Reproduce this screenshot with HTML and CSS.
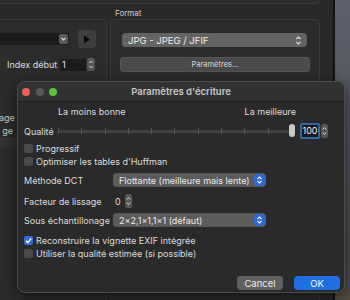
FILE: index.html
```html
<!DOCTYPE html>
<html lang="fr">
  <head>
    <meta charset="UTF-8" />
    <title>Paramètres d'écriture</title>
    <link rel="stylesheet" href="styles.css">
  </head>
  <body>
    <div class="screen">
      <!-- Fenêtre principale (en arrière-plan) -->
      <div class="app">
        <div class="top-box"></div>
        <div class="format-title">Format</div>
        <div class="panels">
          <div class="panel panel-left">
            <div class="row-file">
              <div class="combo">
                <span class="combo-btn">
                  <svg width="9" height="10" viewBox="0 0 9 10"><path d="M2.5 4 L4.5 6 L6.5 4" fill="none" stroke="#ddd" stroke-width="1.2"/></svg>
                </span>
              </div>
              <div class="play">
                <svg width="8" height="9" viewBox="0 0 8 9"><path d="M1 0.5 L7 4.5 L1 8.5 Z" fill="#0a0a0a"/></svg>
              </div>
            </div>
            <div class="row-index">
              <span class="index-label">Index début</span>
              <span class="num-field">1</span>
              <svg class="stepper" width="8" height="13" viewBox="0 0 8 13"><rect x="0" y="0" width="8" height="13" rx="2.5" fill="#565656"/><path d="M2.3 5 L4 3.2 L5.7 5 M2.3 8 L4 9.8 L5.7 8" fill="none" stroke="#ddd" stroke-width="1"/></svg>
            </div>
            <div class="cut-label cut-first">age</div>
            <div class="cut-label">ge</div>
            <div class="list-band"></div>
          </div>
          <div class="panel panel-right">
            <div class="popup-back">
              <span>JPG - JPEG / JFIF</span>
              <svg width="7" height="11" viewBox="0 0 7 11"><path d="M1.5 4 L3.5 2 L5.5 4 M1.5 7 L3.5 9 L5.5 7" fill="none" stroke="#e6e6e6" stroke-width="1.1"/></svg>
            </div>
            <div class="push-back">Paramètres...</div>
          </div>
        </div>
      </div>
      <div class="desktop"></div>

      <!-- Boîte de dialogue -->
      <div class="dialog">
        <div class="titlebar">
          <div class="lights">
            <span class="light red"></span>
            <span class="light gray"></span>
            <span class="light green"></span>
          </div>
          <div class="dialog-title">Paramètres d'écriture</div>
        </div>

        <div class="dialog-body">
          <div class="row-scale">
            <span>La moins bonne</span>
            <span>La meilleure</span>
          </div>

          <div class="row-quality">
            <span class="quality-label">Qualité</span>
            <div class="slider">
              <div class="track"></div>
              <div class="ticks">
                <i></i><i></i><i></i><i></i><i></i><i></i><i></i><i></i><i></i><i></i><i></i>
              </div>
              <div class="knob"></div>
            </div>
            <span class="num-focus">100</span>
            <svg class="stepper" width="7" height="14" viewBox="0 0 7 14"><rect x="0" y="0" width="7" height="14" rx="2.5" fill="#575757"/><path d="M1.8 5.5 L3.5 3.5 L5.2 5.5 M1.8 8.5 L3.5 10.5 L5.2 8.5" fill="none" stroke="#ddd" stroke-width="1"/></svg>
          </div>

          <div class="checks">
            <label class="check"><span class="box"></span>Progressif</label>
            <label class="check"><span class="box"></span>Optimiser les tables d'Huffman</label>
          </div>

          <div class="form-row row-method">
            <span class="form-label">Méthode DCT</span>
            <div class="popup">
              <span>Flottante (meilleure mais lente)</span>
              <svg width="11" height="12" viewBox="0 0 11 12"><rect width="11" height="12" rx="3" fill="#2f6bd6"/><path d="M3.5 5 L5.5 3 L7.5 5 M3.5 7 L5.5 9 L7.5 7" fill="none" stroke="#fff" stroke-width="1.1"/></svg>
            </div>
          </div>

          <div class="form-row row-smooth">
            <span class="form-label">Facteur de lissage</span>
            <span class="num-small">0</span>
            <svg class="stepper" width="7" height="14" viewBox="0 0 7 14"><rect x="0" y="0" width="7" height="14" rx="2.5" fill="#575757"/><path d="M1.8 5.5 L3.5 3.5 L5.2 5.5 M1.8 8.5 L3.5 10.5 L5.2 8.5" fill="none" stroke="#ddd" stroke-width="1"/></svg>
          </div>

          <div class="form-row row-sub">
            <span class="form-label">Sous échantillonage</span>
            <div class="popup">
              <span>2x2,1x1,1x1 (défaut)</span>
              <svg width="11" height="12" viewBox="0 0 11 12"><rect width="11" height="12" rx="3" fill="#2f6bd6"/><path d="M3.5 5 L5.5 3 L7.5 5 M3.5 7 L5.5 9 L7.5 7" fill="none" stroke="#fff" stroke-width="1.1"/></svg>
            </div>
          </div>

          <div class="checks checks-bottom">
            <label class="check"><span class="box on">
              <svg width="9" height="9" viewBox="0 0 9 9"><path d="M2 4.8 L3.8 6.6 L7.2 2.4" fill="none" stroke="#fff" stroke-width="1.4"/></svg>
            </span>Reconstruire la vignette EXIF intégrée</label>
            <label class="check"><span class="box"></span>Utiliser la qualité estimée (si possible)</label>
          </div>

          <div class="actions">
            <button class="btn btn-cancel">Cancel</button>
            <button class="btn btn-ok">OK</button>
          </div>
        </div>
      </div>
    </div>
  </body>
</html>
```

FILE: styles.css
```css
* {
  margin: 0;
  padding: 0;
  box-sizing: border-box;
}

body {
  font-family: Inter, "Noto Sans", sans-serif;
  font-size: 9px;
  color: #dedede;
  background-color: #282828;
  white-space: nowrap;
}

.screen {
  position: relative;
  display: flex;
  width: 350px;
  height: 300px;
  overflow: hidden;
}

/* Fenêtre en arrière-plan */
.app {
  width: 335px;
  height: 300px;
  background-color: #292929;
  border-right: 2px solid #151515;
}

.desktop {
  flex: 1;
  background: linear-gradient(180deg, #5d616c 0%, #4f525a 50%, #4a4a4c 85%, #5a4e44 100%);
}

.top-box {
  width: 320px;
  height: 4px;
  border: 1px solid #3a3a3a;
  border-top: none;
  border-left: none;
  border-bottom-right-radius: 4px;
  background-color: #2c2c2c;
}

.format-title {
  height: 15px;
  padding: 4px 0 0 115px;
  font-size: 8px;
  line-height: 11px;
  color: #cfcfcf;
}

.panels {
  display: flex;
  gap: 3px;
}

.panel {
  height: 290px;
  background-color: #2c2c2c;
  border: 1px solid #3a3a3a;
  border-radius: 4px;
}

.panel-left {
  width: 108px;
  margin-left: -1px;
  border-left: none;
  border-radius: 0 4px 4px 0;
}

.panel-right {
  width: 210px;
  padding: 13px 12px 0 11px;
}

.row-file {
  display: flex;
  align-items: center;
  height: 18px;
  margin-top: 10px;
}

.combo {
  display: flex;
  justify-content: flex-end;
  align-items: center;
  width: 70px;
  height: 12px;
  background-color: #1c1c1c;
  border-radius: 0 3px 3px 0;
  padding-right: 1px;
}

.combo-btn {
  display: flex;
  align-items: center;
  justify-content: center;
  width: 9px;
  height: 10px;
  background-color: #5a5a5a;
  border-radius: 2px;
}

.play {
  display: flex;
  align-items: center;
  justify-content: center;
  width: 18px;
  height: 18px;
  margin-left: 9px;
  background-color: #3e3e3e;
  border-radius: 3px;
}

.row-index {
  display: flex;
  align-items: center;
  height: 13px;
  margin-top: 10px;
  padding-left: 8px;
}

.index-label {
  width: 53px;
}

.num-field {
  width: 26px;
  height: 12px;
  line-height: 12px;
  padding-left: 2px;
  background-color: #1c1c1c;
  color: #e6e6e6;
}

.row-index .stepper {
  margin-left: 1px;
}

.cut-label {
  width: 14px;
  height: 13px;
  line-height: 13px;
  text-align: right;
  color: #cfcfcf;
}

.cut-first {
  margin-top: 40px;
}

.list-band {
  height: 9px;
  margin-top: 1px;
  border-top: 1px solid #3c3c3c;
  background-color: #323232;
}

.popup-back {
  display: flex;
  align-items: center;
  justify-content: space-between;
  height: 14px;
  padding: 0 5px 0 6px;
  background-color: #636363;
  border-radius: 4px;
  color: #f0f0f0;
  font-size: 9.5px;
}

.push-back {
  height: 15px;
  margin: 10px -3px 0 -2px;
  line-height: 13px;
  text-align: center;
  font-size: 7.5px;
  color: #dcdcdc;
  background-color: #4b4b4b;
  border: 1px solid #555;
  border-radius: 3px;
}

/* Boîte de dialogue */
.dialog {
  position: absolute;
  left: 17px;
  top: 81px;
  width: 328px;
  height: 212px;
  display: flex;
  flex-direction: column;
  background-color: #2a2a2a;
  border: 1px solid #4c4c4c;
  border-radius: 8px;
  box-shadow: 0 4px 16px rgba(0, 0, 0, 0.6);
  overflow: hidden;
}

.titlebar {
  position: relative;
  display: flex;
  align-items: center;
  height: 20px;
  background-color: #323232;
  border-bottom: 1px solid #1d1d1d;
}

.lights {
  display: flex;
  gap: 5.5px;
  padding-left: 4px;
}

.light {
  width: 8px;
  height: 8px;
  border-radius: 50%;
}

.red {
  background-color: #ec5f57;
}

.gray {
  background-color: #585858;
}

.green {
  background-color: #5ec23e;
}

.dialog-title {
  position: absolute;
  left: 0;
  right: 0;
  text-align: center;
  font-weight: 600;
  font-size: 9.5px;
  color: #c9c9c9;
}

.dialog-body {
  flex: 1;
  display: flex;
  flex-direction: column;
  padding: 0 4px 2px 6px;
}

.row-scale {
  display: flex;
  justify-content: space-between;
  height: 12px;
  line-height: 12px;
  margin-top: 4px;
  padding: 0 44px 0 34px;
}

.row-quality {
  display: flex;
  align-items: center;
  height: 16px;
  margin-top: 5px;
}

.quality-label {
  width: 34px;
}

.slider {
  position: relative;
  width: 237px;
  height: 16px;
}

.track {
  position: absolute;
  left: 0;
  right: 2px;
  top: 6.5px;
  height: 3px;
  border-radius: 2px;
  background-color: #3f3f3f;
}

.ticks {
  position: absolute;
  left: 0;
  right: 3px;
  top: 5px;
  display: flex;
  justify-content: space-between;
}

.ticks i {
  width: 1px;
  height: 6px;
  background-color: #555;
}

.knob {
  position: absolute;
  right: 0;
  top: 1px;
  width: 6px;
  height: 13px;
  border-radius: 3px;
  background-color: #c9c9c9;
}

.num-focus {
  width: 20px;
  height: 16px;
  margin-left: 5px;
  line-height: 12px;
  text-align: center;
  background-color: #1a1a1a;
  border: 2px solid #2f6aa8;
  border-radius: 2px;
  color: #f2f2f2;
}

.row-quality .stepper {
  margin-left: 1px;
}

.checks {
  display: flex;
  flex-direction: column;
  margin-top: 3px;
}

.checks-bottom {
  margin-top: 7px;
}

.check {
  display: flex;
  align-items: center;
  gap: 3px;
  height: 13px;
}

.box {
  display: flex;
  align-items: center;
  justify-content: center;
  width: 9px;
  height: 9px;
  border-radius: 2px;
  background-color: #4a4a4a;
}

.box.on {
  background-color: #2e6ed8;
}

.form-row {
  display: flex;
  align-items: center;
  height: 14px;
}

.row-method {
  margin-top: 5px;
}

.row-smooth {
  margin-top: 7px;
}

.row-sub {
  margin-top: 5px;
}

.form-label {
  width: 89px;
}

.popup {
  display: flex;
  align-items: center;
  justify-content: space-between;
  width: 153px;
  height: 14px;
  padding: 0 1px 0 6px;
  background-color: #5b5b5b;
  border-radius: 4px;
  color: #ececec;
}

.num-small {
  width: 12px;
  padding-left: 2px;
}

.actions {
  display: flex;
  justify-content: flex-end;
  gap: 11px;
  margin-top: auto;
}

.btn {
  width: 46px;
  height: 14px;
  border: none;
  border-radius: 4px;
  font-family: Inter, "Noto Sans", sans-serif;
  font-size: 9.5px;
  color: #ececec;
}

.btn-cancel {
  background-color: #606060;
}

.btn-ok {
  background-color: #1f6fe3;
  color: #fff;
}
```
